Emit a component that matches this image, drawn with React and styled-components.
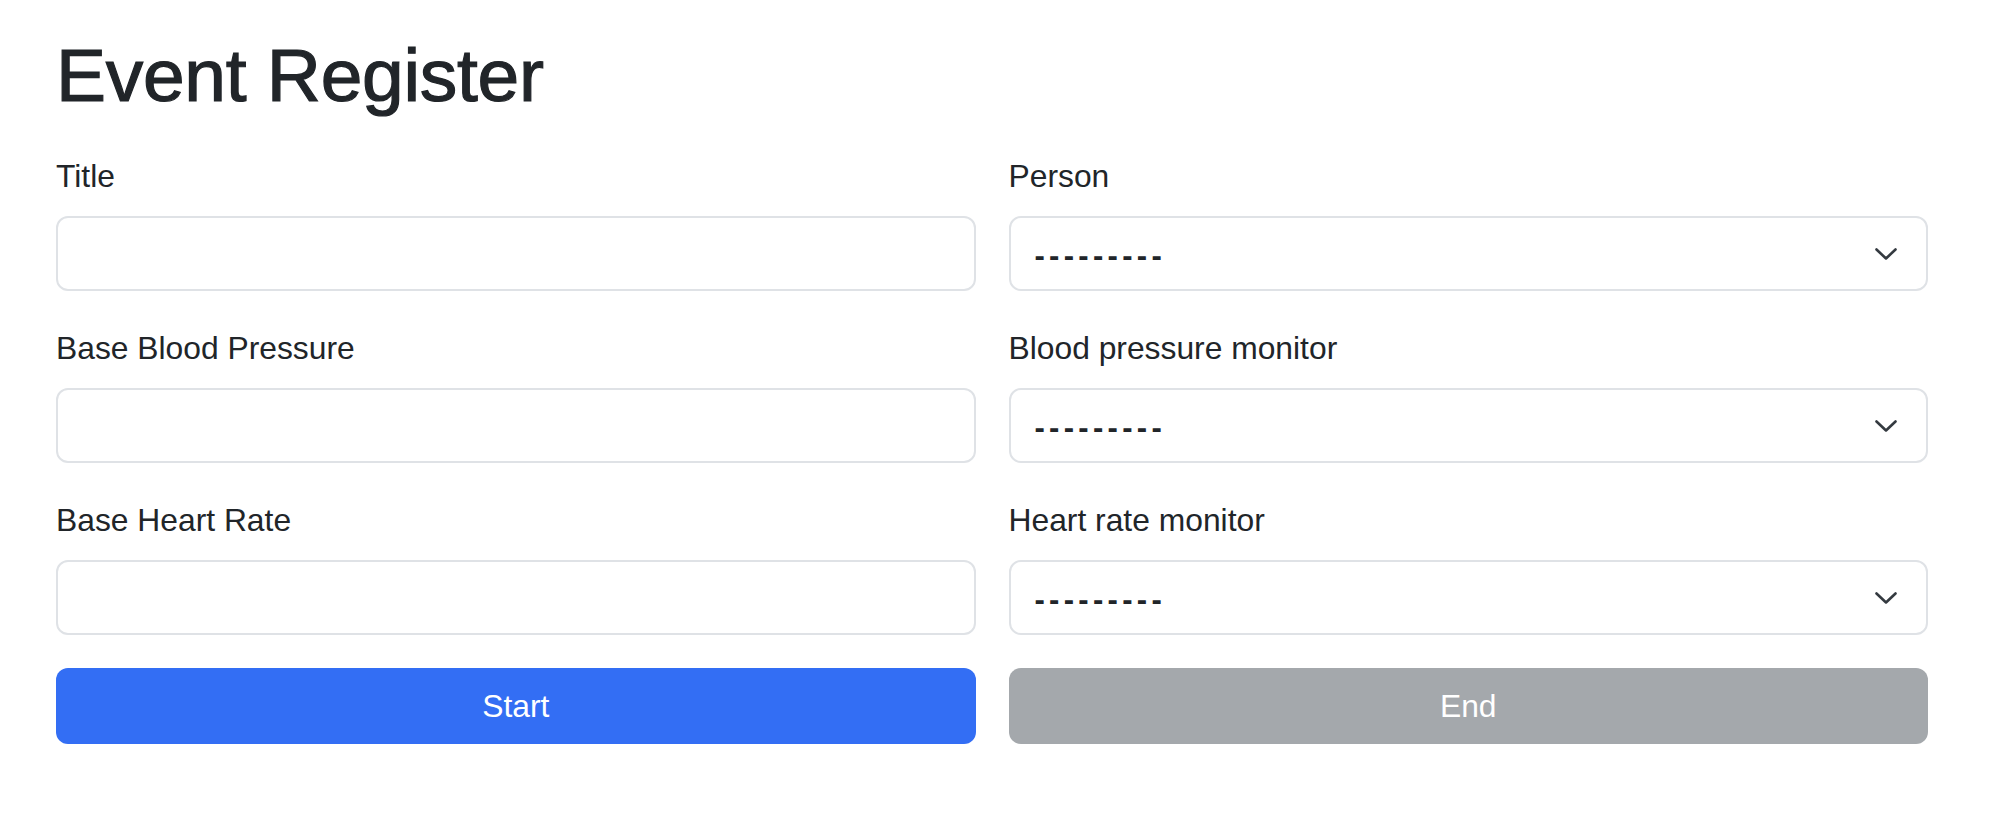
import styled, { createGlobalStyle } from "styled-components"

const GlobalStyle = createGlobalStyle`
    html, body {
        margin: 0;
        padding: 0;
        background: #ffffff;
    }
    body {
        font-family: "Liberation Sans", Arial, sans-serif;
        color: #212529;
    }
    * {
        box-sizing: border-box;
    }
`

const fields = [
    { left: "Title", right: "Person" },
    { left: "Base Blood Pressure", right: "Blood pressure monitor" },
    { left: "Base Heart Rate", right: "Heart rate monitor" },
]

const Chevron = () => (
    <svg width="22" height="12" viewBox="0 0 22 12" fill="none">
        <path d="M1.5 1.5 L11 10.5 L20.5 1.5" stroke="#343a40" strokeWidth="2.6" strokeLinecap="round" strokeLinejoin="round" />
    </svg>
)

const App = () => {
    return (
        <Container>
            <GlobalStyle />
            <Title>Event Register</Title>
            <Form onSubmit={(e) => e.preventDefault()}>
                {fields.map((row) => (
                    <Row key={row.left}>
                        <Group>
                            <Label>{row.left}</Label>
                            <Input type="text" />
                        </Group>
                        <Group>
                            <Label>{row.right}</Label>
                            <SelectBox>
                                <SelectText>---------</SelectText>
                                <Chevron />
                            </SelectBox>
                        </Group>
                    </Row>
                ))}
                <Row>
                    <Button type="button" $variant="primary">Start</Button>
                    <Button type="button" $variant="secondary" disabled>End</Button>
                </Row>
            </Form>
        </Container>
    )
}

const Container = styled.div`
    width: 1928px;
    padding: 30px 0 0 56px;
`
const Title = styled.h1`
    margin: 0 0 32px;
    font-size: 75px;
    line-height: 90px;
    font-weight: 400;
    color: #212529;
    letter-spacing: -0.3px;
    -webkit-text-stroke: 1.2px #212529;
`
const Form = styled.form`
    display: flex;
    flex-direction: column;
`
const Row = styled.div`
    display: grid;
    grid-template-columns: 1fr 1fr;
    column-gap: 33px;
`
const Group = styled.div`
    display: flex;
    flex-direction: column;
    margin-bottom: 33px;
`
const Label = styled.label`
    font-size: 31.8px;
    line-height: 48px;
    margin-bottom: 16px;
    color: #212529;
`
const fieldBox = `
    height: 75px;
    width: 100%;
    border: 2px solid #dfe2e6;
    border-radius: 12px;
    background: #ffffff;
`
const Input = styled.input`
    ${fieldBox}
    padding: 0 24px;
    font-family: inherit;
    font-size: 31px;
    outline: none;
`
const SelectBox = styled.div`
    ${fieldBox}
    display: flex;
    align-items: center;
    justify-content: space-between;
    padding: 0 29px 0 24px;
`
const SelectText = styled.span`
    font-size: 31px;
    line-height: 48px;
    letter-spacing: 4.3px;
    font-weight: 700;
    color: #212529;
    transform: translateY(2px);
`
const Button = styled.button`
    height: 76px;
    border: none;
    border-radius: 12px;
    font-family: inherit;
    font-size: 31.8px;
    color: #ffffff;
    background-color: ${(props) => (props.$variant === "primary" ? "#336ef4" : "#a4a8ac")};
    cursor: ${(props) => (props.disabled ? "default" : "pointer")};
`

export default App
